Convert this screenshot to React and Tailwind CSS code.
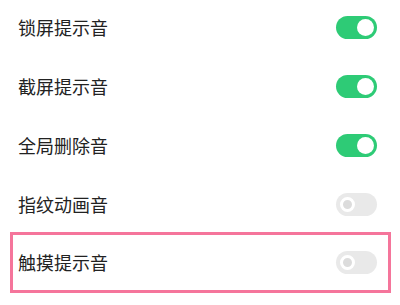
import React from "react";

function Toggle({ on }) {
  if (on) {
    return (
      <div className="w-[41px] h-[23px] rounded-full bg-[#2ecb76] flex items-center justify-end pr-[3px]">
        <div className="w-[17px] h-[17px] rounded-full bg-white" />
      </div>
    );
  }
  return (
    <div className="w-[41px] h-[23px] rounded-full bg-[#e9e9e9] flex items-center justify-start pl-[4px]">
      <div className="w-[15px] h-[15px] rounded-full border-[3px] border-white bg-[#dcdcdc]" />
    </div>
  );
}

function Row({ label, on }) {
  return (
    <div className="h-[59px] flex items-center justify-between pl-[18px] pr-[23px]">
      <span className="text-[18px] text-[#222]">{label}</span>
      <Toggle on={on} />
    </div>
  );
}

export default function App() {
  return (
    <div
      className="w-[400px] h-[305px] bg-white overflow-hidden"
      style={{ fontFamily: '"Noto Sans CJK SC", "Noto Sans", sans-serif' }}
    >
      <div className="-mt-[2px]">
        <Row label="锁屏提示音" on />
        <Row label="截屏提示音" on />
        <Row label="全局删除音" on />
        <Row label="指纹动画音" on={false} />
        <div className="-mt-[2px] mx-[10px] w-[381px] h-[61px] border-[3px] border-[#f5759b] flex items-center justify-between pl-[5px] pr-[11px]">
          <span className="text-[18px] text-[#222]">触摸提示音</span>
          <Toggle on={false} />
        </div>
      </div>
    </div>
  );
}
